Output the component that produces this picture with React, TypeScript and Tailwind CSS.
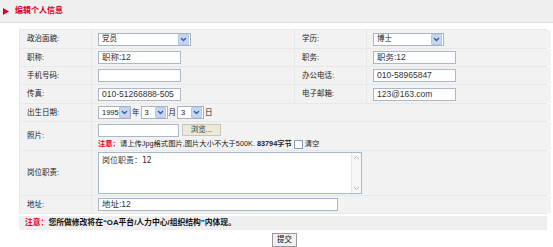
import React from "react";

const font = { fontFamily: '"Liberation Sans", "Noto Sans CJK SC", sans-serif' };

const Arrow = () => (
  <span className="flex h-[11px] w-[11px] shrink-0 items-center justify-center rounded-[1px] border border-[#b7c7e6] bg-[#c6d6f5]">
    <svg width="7" height="5" viewBox="0 0 7 5">
      <path d="M1 1 L3.5 3.5 L6 1" fill="none" stroke="#3a5a9c" strokeWidth="1.4" />
    </svg>
  </span>
);

const Select = ({ value, w }: { value: string; w: string }) => (
  <div className={`flex h-[13px] items-center justify-between border border-[#a9b3c2] bg-white pl-[3px] pr-px ${w}`}>
    <span className="text-[7.5px] leading-none text-[#222]">{value}</span>
    <Arrow />
  </div>
);

const Input = ({ value, w }: { value: string; w: string }) => (
  <div className={`flex h-[13px] items-center border border-[#a9b9cc] bg-white px-[3px] text-[8.5px] leading-none text-[#333] ${w}`}>
    {value}
  </div>
);

const Label = ({ children }: { children: React.ReactNode }) => (
  <div className="flex items-center bg-[#f2f2f2] pl-[7px] text-[7.5px] text-[#222]">{children}</div>
);

const Cell = ({ children, className = "" }: { children?: React.ReactNode; className?: string }) => (
  <div className={`flex items-center bg-[#f2f2f2] pl-[6px] ${className}`}>{children}</div>
);

const App: React.FC = () => {
  return (
    <div className="h-[247px] w-[553px] overflow-hidden bg-white" style={font}>
      {/* header */}
      <div className="flex h-[23px] items-center border-b border-[#dedede] bg-[#efefef] pl-[3px]">
        <svg width="6" height="7" viewBox="0 0 6 7" className="mr-[6px]">
          <path d="M0 0 L6 3.5 L0 7 Z" fill="#d4002a" />
        </svg>
        <span className="text-[8px] font-bold text-[#d4002a]">编辑个人信息</span>
      </div>

      <div className="ml-[19px] mt-[6px] w-[528px]">
        <div className="grid grid-cols-[71px_202px_71px_184px] gap-px border border-[#e8e8e8] bg-[#e8e8e8]">
          <Label>政治面貌:</Label>
          <Cell className="h-[18px]"><Select value="党员" w="w-[93px]" /></Cell>
          <Label>学历:</Label>
          <Cell><Select value="博士" w="w-[71px]" /></Cell>

          <Label>职称:</Label>
          <Cell className="h-[17px]"><Input value="职称:12" w="w-[83px]" /></Cell>
          <Label>职务:</Label>
          <Cell><Input value="职务:12" w="w-[83px]" /></Cell>

          <Label>手机号码:</Label>
          <Cell className="h-[17px]"><Input value="" w="w-[83px]" /></Cell>
          <Label>办公电话:</Label>
          <Cell><Input value="010-58965847" w="w-[83px]" /></Cell>

          <Label>传真:</Label>
          <Cell className="h-[18px]"><Input value="010-51266888-505" w="w-[83px]" /></Cell>
          <Label>电子邮箱:</Label>
          <Cell><Input value="123@163.com" w="w-[83px]" /></Cell>

          <Label>出生日期:</Label>
          <Cell className="col-span-3 h-[17px] gap-px text-[7.5px] text-[#222]">
            <Select value="1995" w="w-[33px]" />
            <span>年</span>
            <Select value="3" w="w-[27px]" />
            <span>月</span>
            <Select value="3" w="w-[27px]" />
            <span>日</span>
          </Cell>

          <Label>照片:</Label>
          <div className="col-span-3 flex h-[28px] flex-col justify-center gap-[3px] bg-[#f2f2f2] pl-[6px]">
            <div className="flex items-center gap-[3px]">
              <Input value="" w="w-[81px] h-[11px]" />
              <div className="flex h-[12px] w-[39px] items-center justify-center border border-[#c9c6b8] bg-[#ece9d8] text-[7.5px] text-[#333]">
                浏览...
              </div>
            </div>
            <div className="flex items-center text-[7.3px] leading-none text-[#222]">
              <span className="font-bold text-[#e0001b]">注意：</span>
              <span>请上传Jpg格式图片,图片大小不大于500K.</span>
              <span className="ml-[2px] font-bold">83794字节</span>
              <span className="mx-[2px] h-[9px] w-[9px] border border-[#8a9bb3] bg-white" />
              <span>清空</span>
            </div>
          </div>

          <Label>岗位职责:</Label>
          <div className="col-span-3 flex h-[44px] items-center bg-[#f2f2f2] pl-[6px]">
            <div className="flex h-[42px] w-[264px] border border-[#a9b9cc] bg-white">
              <div className="flex-1 px-[3px] pt-[2px] text-[8px] text-[#333]" style={{ fontFamily: '"DejaVu Sans Mono", "Noto Sans CJK SC", monospace' }}>
                岗位职责：12
              </div>
              <div className="flex w-[10px] flex-col justify-between border-l border-[#e8e8e8] bg-[#f7f7f7] py-[2px]">
                <svg width="9" height="6" viewBox="0 0 9 6"><path d="M2 4 L4.5 1.5 L7 4" fill="none" stroke="#bbb" strokeWidth="1" /></svg>
                <svg width="9" height="6" viewBox="0 0 9 6"><path d="M2 2 L4.5 4.5 L7 2" fill="none" stroke="#bbb" strokeWidth="1" /></svg>
              </div>
            </div>
          </div>

          <Label>地址:</Label>
          <Cell className="col-span-3 h-[17px]"><Input value="地址:12" w="w-[240px]" /></Cell>
        </div>

        <div className="mt-[2px] flex h-[14px] items-center bg-[#efefef] pl-[6px] text-[7.8px] font-bold text-[#111]">
          <span className="text-[#e0001b]">注意：</span>
          <span>您所做修改将在“OA平台/人力中心/组织结构”内体现。</span>
        </div>
      </div>

      <div className="mt-[3px] flex justify-center pl-[16px]">
        <div className="flex h-[14px] w-[25px] items-center justify-center border border-[#9a9a9a] bg-[#f0f0f0] text-[7.5px] text-[#111]">
          提交
        </div>
      </div>
    </div>
  );
};

export default App;
